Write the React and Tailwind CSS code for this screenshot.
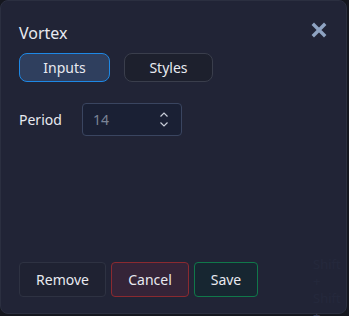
import React, { useState } from 'react';

const App = () => {
  const [tab, setTab] = useState('inputs');
  const [period, setPeriod] = useState(14);

  return (
    <div className="relative w-[349px] h-[316px] bg-[#15171f] overflow-hidden" style={{ fontFamily: '"Noto Sans", "Open Sans", sans-serif' }}>
      {/* faint hotkey hints behind the dialog */}
      <div className="absolute left-[313px] top-[256px] text-[13px] leading-[17px] text-[#3b4058]">
        <p>Shift +</p>
        <p>Shift +</p>
        <p>Shift +</p>
      </div>

      <div className="relative w-[347px] h-[314px] rounded-lg border border-[#2b2f40] bg-[#222638]/90 flex flex-col px-[18px] pt-[20px] pb-[16px]">
        <div className="flex items-center justify-between h-6">
          <h2 className="text-[16px] text-[#e8eaf0]">Vortex</h2>
          <button className="text-[#8ea3c2] -mt-[7px] mr-[1px]">
            <svg width="16" height="16" viewBox="0 0 16 16" fill="none" stroke="currentColor" strokeWidth="3.4" strokeLinecap="square">
              <path d="M3 3 L13 13 M13 3 L3 13" />
            </svg>
          </button>
        </div>

        <div className="flex gap-[14px] mt-[8px]">
          <button
            onClick={() => setTab('inputs')}
            className={`w-[91px] h-[29px] rounded-lg border text-[14px] ${tab === 'inputs' ? 'bg-[#2f3f5e] border-[#1e88e5] text-[#e8eaf0]' : 'bg-[#1d202d] border-[#3a3e4c] text-[#e8eaf0]'}`}
          >
            Inputs
          </button>
          <button
            onClick={() => setTab('styles')}
            className={`w-[89px] h-[29px] rounded-lg border text-[14px] ${tab === 'styles' ? 'bg-[#2f3f5e] border-[#1e88e5] text-[#e8eaf0]' : 'bg-[#1d202d] border-[#3a3e4c] text-[#e8eaf0]'}`}
          >
            Styles
          </button>
        </div>

        <div className="flex items-center mt-[21px]">
          <label className="w-[63px] text-[14px] text-[#e8eaf0]">Period</label>
          <div className="w-[100px] h-[33px] rounded border border-[#3a4560] bg-[#1a2034] flex items-center pl-[10px] pr-[12px]">
            <span className="flex-1 text-[14px] text-[#7b8497]">{period}</span>
            <div className="flex flex-col items-center text-[#c9ced9]">
              <button onClick={() => setPeriod(period + 1)}>
                <svg width="10" height="7" viewBox="0 0 10 7" fill="none" stroke="currentColor" strokeWidth="1.2">
                  <path d="M1.5 5.5 L5 2 L8.5 5.5" />
                </svg>
              </button>
              <button onClick={() => setPeriod(Math.max(1, period - 1))} className="mt-[3px]">
                <svg width="10" height="7" viewBox="0 0 10 7" fill="none" stroke="currentColor" strokeWidth="1.2">
                  <path d="M1.5 1.5 L5 5 L8.5 1.5" />
                </svg>
              </button>
            </div>
          </div>
        </div>

        <div className="flex-1" />

        <div className="flex gap-[5px]">
          <button className="w-[87px] h-[35px] rounded border border-[#2e3242] bg-[#1f2232] text-[14px] text-[#e8eaf0]">Remove</button>
          <button className="w-[78px] h-[35px] rounded border border-[#8a2a30] bg-[#352438] text-[14px] text-[#e8eaf0]">Cancel</button>
          <button className="w-[64px] h-[35px] rounded border border-[#10784a] bg-[#172631] text-[14px] text-[#e8eaf0]">Save</button>
        </div>
      </div>
    </div>
  );
};

export default App;
